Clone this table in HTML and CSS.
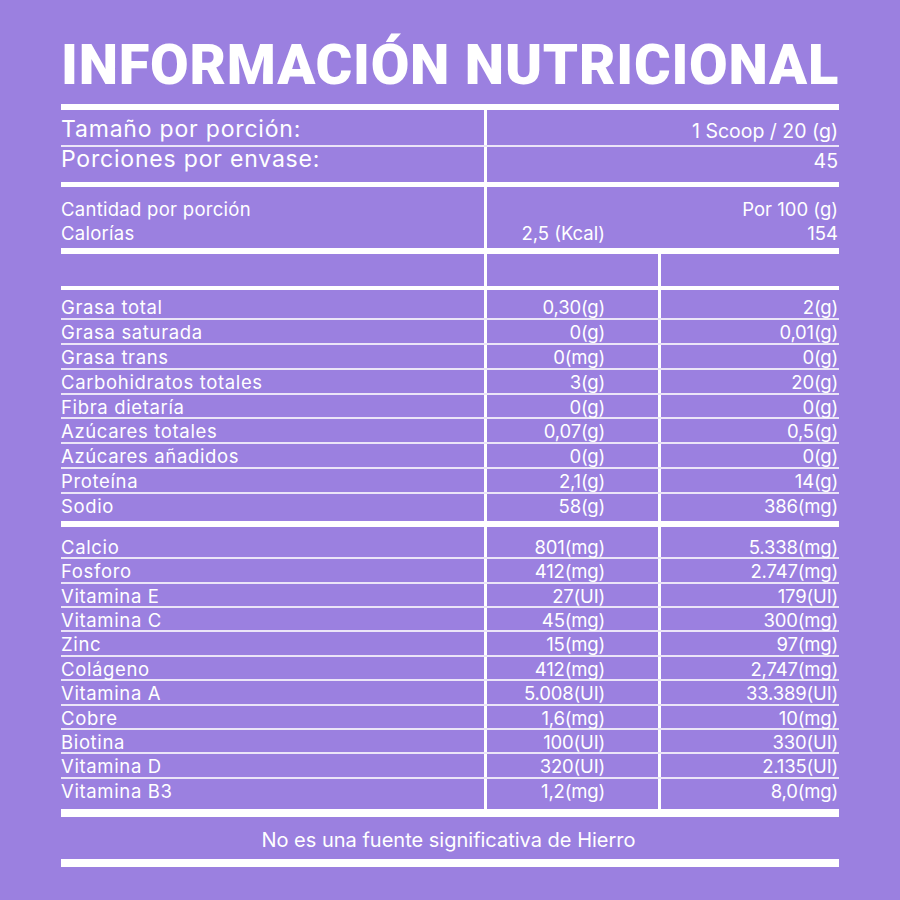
FILE: index.html
```html
<!DOCTYPE html>
<html lang="es">
<head>
<meta charset="utf-8">
<title>Información nutricional</title>
<link rel="stylesheet" href="styles.css">
</head>
<body>
<div class="sheet">
  <h1 class="title">INFORMACIÓN NUTRICIONAL</h1>
  <div class="rule r6"></div>
  <div class="serving">
    <div class="srow first"><span class="lbl">Tamaño por porción:</span><span class="val">1 Scoop / 20 (g)</span></div>
    <div class="srow second"><span class="lbl">Porciones por envase:</span><span class="val">45</span></div>
  </div>
  <div class="rule r5"></div>
  <div class="amount">
    <div class="a-lbl"><div>Cantidad por porción</div><div>Calorías</div></div>
    <div class="a-val">
      <div class="a-top">Por 100 (g)</div>
      <div class="a-bot"><span class="mid">2,5 (Kcal)</span><span class="right">154</span></div>
    </div>
  </div>
  <div class="rule r6"></div>
  <div class="blank"><div></div><div class="c2"></div><div class="c3"></div></div>
  <div class="rule r4"></div>
  <div class="sec sec-a">
    <div class="nrow"><span>Grasa total</span><span class="v1">0,30(g)</span><span class="v2">2(g)</span></div>
    <div class="nrow"><span>Grasa saturada</span><span class="v1">0(g)</span><span class="v2">0,01(g)</span></div>
    <div class="nrow"><span>Grasa trans</span><span class="v1">0(mg)</span><span class="v2">0(g)</span></div>
    <div class="nrow"><span>Carbohidratos totales</span><span class="v1">3(g)</span><span class="v2">20(g)</span></div>
    <div class="nrow"><span>Fibra dietaría</span><span class="v1">0(g)</span><span class="v2">0(g)</span></div>
    <div class="nrow"><span>Azúcares totales</span><span class="v1">0,07(g)</span><span class="v2">0,5(g)</span></div>
    <div class="nrow"><span>Azúcares añadidos</span><span class="v1">0(g)</span><span class="v2">0(g)</span></div>
    <div class="nrow"><span>Proteína</span><span class="v1">2,1(g)</span><span class="v2">14(g)</span></div>
    <div class="nrow"><span>Sodio</span><span class="v1">58(g)</span><span class="v2">386(mg)</span></div>
  </div>
  <div class="rule r6"></div>
  <div class="sec sec-b">
    <div class="nrow"><span>Calcio</span><span class="v1">801(mg)</span><span class="v2">5.338(mg)</span></div>
    <div class="nrow"><span>Fosforo</span><span class="v1">412(mg)</span><span class="v2">2.747(mg)</span></div>
    <div class="nrow"><span>Vitamina E</span><span class="v1">27(UI)</span><span class="v2">179(UI)</span></div>
    <div class="nrow"><span>Vitamina C</span><span class="v1">45(mg)</span><span class="v2">300(mg)</span></div>
    <div class="nrow"><span>Zinc</span><span class="v1">15(mg)</span><span class="v2">97(mg)</span></div>
    <div class="nrow"><span>Colágeno</span><span class="v1">412(mg)</span><span class="v2">2,747(mg)</span></div>
    <div class="nrow"><span>Vitamina A</span><span class="v1">5.008(UI)</span><span class="v2">33.389(UI)</span></div>
    <div class="nrow"><span>Cobre</span><span class="v1">1,6(mg)</span><span class="v2">10(mg)</span></div>
    <div class="nrow"><span>Biotina</span><span class="v1">100(UI)</span><span class="v2">330(UI)</span></div>
    <div class="nrow"><span>Vitamina D</span><span class="v1">320(UI)</span><span class="v2">2.135(UI)</span></div>
    <div class="nrow"><span>Vitamina B3</span><span class="v1">1,2(mg)</span><span class="v2">8,0(mg)</span></div>
  </div>
  <div class="rule r8"></div>
  <p class="note">No es una fuente significativa de Hierro</p>
  <div class="rule r8"></div>
</div>
</body>
</html>
```
FILE: styles.css
```css
* { box-sizing: border-box; }

body {
  margin: 0;
  background: #9b80e0;
  color: #ffffff;
  font-family: Inter, "Noto Sans", sans-serif;
}

.sheet {
  width: 778px;
  margin-left: 61px;
  padding-top: 37px;
}

.title {
  margin: 0 0 11px;
  font-family: Roboto, "Liberation Sans", sans-serif;
  font-weight: 900;
  font-size: 56px;
  line-height: 56px;
  letter-spacing: 0.75px;
  white-space: nowrap;
}

.rule { background: #ffffff; }
.r4 { height: 4px; }
.r5 { height: 5px; }
.r6 { height: 6px; }
.r8 { height: 8px; }

/* serving rows */
.srow {
  display: grid;
  grid-template-columns: 423px 355px;
  font-size: 23px;
  letter-spacing: 0.035em;
  white-space: nowrap;
}
.srow > span { display: block; }
.srow .val {
  border-left: 3px solid #ffffff;
  text-align: right;
  font-size: 19.5px;
  letter-spacing: 0;
  padding-right: 1px;
}
.srow.first {
  height: 37px;
  border-bottom: 2px solid #ebe5f8;
}
.srow.first > span { padding-top: 6px; line-height: 26px; }
.srow.first > .val { padding-top: 8px; }
.srow.second { height: 35px; }
.srow.second > span { padding-top: 0; line-height: 25px; }
.srow.second > .val { padding-top: 2px; }

/* amount block */
.amount {
  display: grid;
  grid-template-columns: 423px 355px;
  height: 61px;
  font-size: 18.5px;
  line-height: 24px;
  letter-spacing: 0.015em;
  white-space: nowrap;
}
.amount > div { padding-top: 10px; }
.a-val { border-left: 3px solid #ffffff; letter-spacing: 0; }
.a-top { text-align: right; padding-right: 1px; }
.a-bot {
  display: grid;
  grid-template-columns: 171px 1fr;
}
.a-bot .mid { text-align: right; padding-right: 53px; }
.a-bot .right { text-align: right; padding-right: 1px; }

/* blank row */
.blank {
  display: grid;
  grid-template-columns: 423px 174px 181px;
  height: 32px;
}
.blank .c2, .blank .c3 { border-left: 3px solid #ffffff; }

/* nutrient rows */
.nrow {
  display: grid;
  grid-template-columns: 423px 174px 181px;
  height: 24.9px;
  border-bottom: 2px solid #ebe5f8;
  font-size: 18.5px;
  line-height: 20px;
  letter-spacing: 0.035em;
  white-space: nowrap;
}
.nrow > span { padding-top: 2px; }
.nrow .v1 {
  border-left: 3px solid #ffffff;
  text-align: right;
  padding-right: 53px;
  letter-spacing: -0.01em;
}
.nrow .v2 {
  border-left: 3px solid #ffffff;
  text-align: right;
  padding-right: 1px;
  letter-spacing: -0.01em;
}
.nrow:last-child { border-bottom: none; }

.sec-a .nrow:first-child { height: 29.9px; }
.sec-a .nrow:first-child > span { padding-top: 7px; }
.sec-a .nrow:last-child { height: 26.8px; }

.sec-b .nrow { height: 24.4px; }
.sec-b .nrow:first-child { height: 32.4px; }
.sec-b .nrow:first-child > span { padding-top: 10px; }
.sec-b .nrow:last-child { height: 30px; }

.note {
  margin: 0;
  height: 42px;
  padding-top: 4px;
  padding-right: 3px;
  line-height: 38px;
  font-size: 20px;
  text-align: center;
  white-space: nowrap;
}
```
